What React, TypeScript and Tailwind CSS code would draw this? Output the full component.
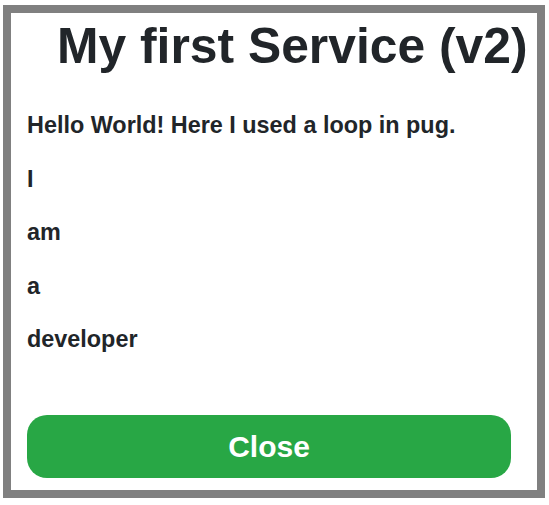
const LINES = ['I', 'am', 'a', 'developer'];

export default function App() {
  return (
    <div className="w-[549px] h-[505px] bg-white pl-[3px] pt-[5px] font-['Liberation_Sans',Arial,sans-serif] text-[#212529]">
      <div className="w-[542px] h-[493px] border-8 border-[#808080] bg-white pl-4 overflow-hidden">
        <h1 className="mt-[8px] ml-[30px] text-[49.8px] leading-[50px] font-bold whitespace-nowrap">
          My first Service (v2)
        </h1>
        <div className="mt-[41px] flex flex-col gap-[27.5px] text-[23.4px] leading-[26px] font-bold">
          <p>Hello World! Here I used a loop in pug.</p>
          {LINES.map((w) => (
            <p key={w}>{w}</p>
          ))}
        </div>
        <button className="mt-[63px] w-[484px] h-[63px] rounded-[20px] bg-[#28a745] text-white text-[30px] font-bold">
          Close
        </button>
      </div>
    </div>
  );
}
